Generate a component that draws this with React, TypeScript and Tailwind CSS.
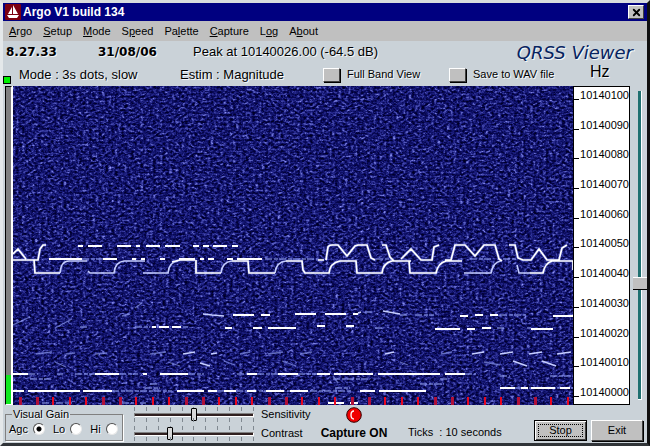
import React, { useState } from 'react';
import { XIcon } from 'lucide-react';

const menuItems = [
  { label: 'Argo', key: 0 },
  { label: 'Setup', key: 0 },
  { label: 'Mode', key: 0 },
  { label: 'Speed', key: 1 },
  { label: 'Palette', key: 2 },
  { label: 'Capture', key: 0 },
  { label: 'Log', key: 1 },
  { label: 'About', key: 1 }
];

const frequencies = [10140100, 10140090, 10140080, 10140070, 10140060, 10140050, 10140040, 10140030, 10140020, 10140010, 10140000];

// [y, x1, x2, x1, x2, ...]
const strongDashes = [
  [246, 78, 83, 88, 102, 117, 131, 136, 140, 146, 160, 165, 180, 193, 199, 203, 209, 213, 227, 232, 238],
  [259, 49, 82, 103, 117, 132, 136, 141, 145, 160, 165, 179, 195, 200, 204, 208, 214, 227, 233, 237, 262],
  [327, 152, 156, 159, 169, 172, 181],
  [315, 233, 254, 261, 270, 475, 483, 490, 498],
  [314, 295, 316, 325, 346, 353, 358],
  [316, 460, 468, 553, 573],
  [328, 225, 232, 253, 262, 482, 491],
  [328, 268, 296],
  [329, 435, 460, 467, 475, 531, 553],
  [326, 317, 325, 346, 354],
  [374, 13, 28, 95, 119, 143, 147, 160, 188, 247, 257, 278, 298, 317, 330, 334, 373, 378, 440, 445, 465],
  [391, 13, 24, 28, 80, 83, 112, 177, 204, 208, 217, 224, 236, 247, 256, 266, 284, 290, 308, 360, 375, 379, 426],
  [388, 500, 515, 521, 528, 531, 555, 560, 570],
  [403, 328, 344, 350, 358]
];

const faintDashes = [
  [259, 82, 103, 265, 317, 376, 392, 470, 491, 503, 516],
  [327, 135, 150, 183, 188, 80, 88, 346, 352],
  [315, 400, 408, 415, 434, 500, 526],
  [312, 365, 374],
  [328, 497, 505, 527, 531, 375, 383],
  [374, 28, 38, 57, 63, 75, 95, 119, 138, 188, 204, 237, 247, 257, 278, 298, 317, 465, 476],
  [376, 550, 573, 500, 510],
  [379, 30, 52, 333, 370, 440, 448],
  [384, 420, 444, 150, 158],
  [391, 112, 172, 217, 224, 236, 300, 310, 352],
  [388, 145, 160, 335, 350, 515, 573],
  [403, 42, 50, 56, 72, 122, 134, 140, 146]
];

const strongTraces = [
  'M13 260H38L40 249L43 245H46',
  'M13 254L18 249L26 259',
  'M34 260L35 273H60',
  'M326 260L328 247Q329 245 332 245H338L347 256L355 246L358 245H367L371 258L375 260',
  'M318 260H324',
  'M382 245H386L390 257L394 261H411',
  'M401 259L411 249L421 260H432L434 247L439 245',
  'M445 260H451L455 245H465L475 256L484 245H495L499 259L502 261',
  'M509 245H515L518 258L523 260H531L539 249L547 260H559L562 248L567 245',
  'M196 260V273H221',
  'M232 261H248L249 273H275',
  'M286 261H302L303 270L305 273H329Q330 263 340 261H356L357 273H382Q383 263 392 261H409L410 273H436Q438 263 446 261H462',
  'M530 273H543Q545 263 552 261H573V270',
  'M172 262L180 260H195'
];

const softTraces = [
  'M60 273Q61 261 69 261H87',
  'M88 271L90 273H114Q115 262 124 261H145',
  'M143 273H168Q169 262 178 261',
  'M221 273Q222 262 232 261',
  'M275 273Q276 262 286 261',
  'M464 273H491Q493 262 501 261',
  'M517 265L519 273H530',
  'M203 314L212 315L224 316',
  'M358 313L361 312M383 311L400 314',
  'M183 354L195 352M211 354L217 353M385 354L394 352',
  'M472 354L484 352M500 354L513 352M529 354L542 352M557 354L571 352',
  'M200 363L210 366M542 361L556 366M513 361L527 366'
];

const dimTraces = [
  'M13 325L30 317M55 328L72 319M135 308L142 303M122 316L130 314',
  'M36 354L52 352M66 354L75 353M240 354L250 352M268 354L283 352M300 354L312 352M441 354L452 352M95 354L107 353M150 354L166 352',
  'M55 362L66 367M168 362L180 366M224 361L235 365M282 361L296 366M484 362L500 365M571 361V364M400 362L408 365M333 376L338 383'
];

const dashPath = (rows: number[][]) => rows.map(([y, ...xs]) => xs.map((x, i) => i % 2 === 0 ? `M${x} ${y}` : `H${x}`).join('')).join('');

const tickMarks = Array.from({ length: 34 }, (_, i) => Math.round(20 + i * 16.6));

const Spectrogram = () => <svg viewBox="13 86 560 319" preserveAspectRatio="none" className="h-full w-full" role="img" aria-label="Waterfall display">
    <defs>
      <filter id="noise" x="0" y="0" width="100%" height="100%" colorInterpolationFilters="sRGB">
        <feTurbulence type="fractalNoise" baseFrequency="0.313 0.437" numOctaves="3" seed="11" />
        <feColorMatrix values="0.6 0.6 0.5 0 -0.35  0.6 0.6 0.5 0 -0.35  0.6 0.6 0.5 0 -0.35  0 0 0 0 1" />
        <feComponentTransfer>
          <feFuncR type="table" tableValues="0 0 0 0.01 0.03 0.07 0.15 0.27 0.4 0.5 0.6" />
          <feFuncG type="table" tableValues="0 0 0 0.01 0.03 0.08 0.16 0.29 0.42 0.52 0.6" />
          <feFuncB type="table" tableValues="0.12 0.12 0.15 0.22 0.32 0.43 0.55 0.68 0.8 0.9 1" />
        </feComponentTransfer>
      </filter>
    </defs>
    <rect x="13" y="86" width="560" height="319" filter="url(#noise)" />
    <g fill="none" stroke="#8f9cf0">
      <path d={dashPath(faintDashes)} strokeWidth="1.4" strokeDasharray="7 2 4 1" opacity="0.75" />
      <path d={dimTraces.join('')} strokeWidth="1.3" opacity="0.65" />
      <path d={softTraces.join('')} stroke="#c5cdff" strokeWidth="1.600" />
      <path d={strongTraces.join('')} stroke="#6c78e0" strokeWidth="3" opacity="0.5" />
      <path d={strongTraces.join('')} stroke="#ffffff" strokeWidth="1.700" />
      <path d={dashPath(strongDashes)} stroke="#ffffff" strokeWidth="2" />
    </g>
    {tickMarks.map((x, i) => <rect key={x} x={x - 1} y="397" width={i % 5 < 2 ? 3 : 2} height="8" fill={i % 5 < 2 ? '#b01038' : '#e80820'} />)}
  </svg>;

const raised = 'border border-t-white border-l-white border-r-[#404040] border-b-[#404040] bg-[#c0c0c0]';
const engraved = '[text-shadow:1px_1px_0_#f4f8fa]';

const ToggleBox = ({ label, className }: { label: string; className: string }) => <label className={`flex shrink-0 items-center gap-[7px] text-[11px] ${className}`}>
    <input type="checkbox" className={`h-[14px] w-[17px] appearance-none shadow-[1px_1px_0_#000] ${raised}`} />
    {label}
  </label>;

const TickRow = () => <div className="flex h-[4px] justify-between">
    {Array.from({ length: 11 }, (_, i) => <span key={i} className="w-px bg-[#808890]" />)}
  </div>;

const TrackBar = ({ id, initial }: { id: string; initial: number }) => {
  const [value, setValue] = useState(initial);
  return <div className="w-[120px]">
      <TickRow />
      <input id={id} type="range" min={0} max={100} value={value} onChange={e => setValue(Number(e.target.value))} className="-my-[3px] block h-[13px] w-full appearance-none bg-transparent [&::-webkit-slider-runnable-track]:h-[4px] [&::-webkit-slider-runnable-track]:border [&::-webkit-slider-runnable-track]:border-t-[#808080] [&::-webkit-slider-runnable-track]:border-l-[#808080] [&::-webkit-slider-runnable-track]:border-r-white [&::-webkit-slider-runnable-track]:border-b-white [&::-webkit-slider-runnable-track]:bg-[#302020] [&::-webkit-slider-thumb]:-mt-[6px] [&::-webkit-slider-thumb]:h-[13px] [&::-webkit-slider-thumb]:w-[6px] [&::-webkit-slider-thumb]:appearance-none [&::-webkit-slider-thumb]:rounded-[1px] [&::-webkit-slider-thumb]:border [&::-webkit-slider-thumb]:border-black [&::-webkit-slider-thumb]:bg-[#d8d8d8]" />
      <TickRow />
    </div>;
};

const App: React.FC = () => {
  const [gain, setGain] = useState('Agc');
  const [offset, setOffset] = useState(37);
  return <div className="border-[3px] border-t-[#d8dcde] border-l-[#e4e8ea] border-r-[#101010] border-b-[#303438] bg-[#cad2d8] font-['Liberation_Sans',Arial,sans-serif] text-black">
      <header className="flex h-[18px] items-center bg-[#000080] pr-[3px] pl-[2px]">
        <svg viewBox="0 0 16 16" className="h-4 w-4" aria-hidden="true">
          <rect width="16" height="16" rx="1" fill="#7c0010" />
          <path d="M7 3V10H3Z M8 1L13 10H8Z M2 11H14L12 14H4Z" fill="#fff" />
        </svg>
        <h1 className="ml-[2px] text-[12px] font-bold text-white">Argo V1 build 134</h1>
        <button aria-label="Close" className={`ml-auto flex h-[14px] w-4 items-center justify-center ${raised}`}>
          <XIcon className="h-[11px] w-[11px] shrink-0" strokeWidth={4} />
        </button>
      </header>
      <nav className="flex h-5 items-center gap-[11px] bg-[#c0c0c0] pl-[6px] text-[11px]">
        {menuItems.map(({ label, key }) => <button key={label}>
            {label.slice(0, key)}<u>{label[key]}</u>{label.slice(key + 1)}
          </button>)}
      </nav>

      <div className={`flex h-[22px] items-center pl-[3px] ${engraved}`}>
        <span className="w-[92px] font-['DejaVu_Sans',sans-serif] text-[12px] font-bold">8.27.33</span>
        <span className="w-[95px] font-['DejaVu_Sans',sans-serif] text-[12px] font-bold">31/08/06</span>
        <span className="text-[13px]">Peak at 10140026.00 (-64.5 dB)</span>
        <span className="mr-[14px] ml-auto font-['DejaVu_Sans',sans-serif] text-[18px] text-[#082460] italic">QRSS Viewer</span>
      </div>
      <div className={`flex h-[23px] items-center text-[13px] ${engraved}`}>
        <span className="mb-[2px] h-2 w-2 self-end border border-black bg-[#00f000]" />
        <span className="ml-[8px] w-[161px] shrink-0">Mode : 3s dots, slow</span>
        <span className="w-[143px] shrink-0">Estim : Magnitude</span>
        <ToggleBox label="Full Band View" className="w-[126px]" />
        <ToggleBox label="Save to WAV file" className="w-[141px]" />
        <span className="mb-[6px] text-[16px]">Hz</span>
      </div>

      <main className="flex h-[319px]">
        <div className="ml-[2px] flex w-[7px] shrink-0 flex-col border border-t-black border-r-white border-b-white border-l-black bg-[#808080]">
          <span className="mt-auto h-[29px] bg-[#10e820]" />
        </div>
        <div className="min-w-0 flex-1 border-l border-white">
          <Spectrogram />
        </div>
        <ol className="flex w-[57px] shrink-0 flex-col justify-between border border-black bg-white pt-px pb-[5px] text-[11px] leading-[14px]">
          {frequencies.map(f => <li key={f} className="flex justify-between">
              <span className="mb-[2px] w-[5px] self-end border-b border-black" />
              <span>{f}</span>
            </li>)}
        </ol>
        <div className="flex w-[17px] shrink-0 justify-end py-[5px]">
          <input aria-label="Frequency offset" type="range" min={0} max={100} value={offset} onChange={e => setOffset(Number(e.target.value))} className="h-full w-[14px] appearance-none bg-transparent [direction:rtl] [writing-mode:vertical-lr] [&::-webkit-slider-runnable-track]:w-[4px] [&::-webkit-slider-runnable-track]:border-r [&::-webkit-slider-runnable-track]:border-b [&::-webkit-slider-runnable-track]:border-white [&::-webkit-slider-runnable-track]:bg-[#207070] [&::-webkit-slider-thumb]:-ml-[5px] [&::-webkit-slider-thumb]:h-[13px] [&::-webkit-slider-thumb]:w-[14px] [&::-webkit-slider-thumb]:appearance-none [&::-webkit-slider-thumb]:border-t [&::-webkit-slider-thumb]:border-b [&::-webkit-slider-thumb]:border-t-white [&::-webkit-slider-thumb]:border-b-black [&::-webkit-slider-thumb]:bg-[#c0c0c0]" />
        </div>
      </main>

      <footer className="flex h-[38px] text-[11px]">
        <fieldset className={`mt-[2px] ml-[2px] h-[34px] w-[118px] shrink-0 border border-[#808080] shadow-[1px_1px_0_#fff] ${engraved}`}>
          <legend className="ml-[6px] px-px leading-[14px]">Visual Gain</legend>
          <div className="flex items-center gap-[8px] pl-[3px] leading-[16px]">
            {['Agc', 'Lo', 'Hi'].map(name => <label key={name} className="flex items-center gap-[5px]">
                {name}
                <input type="radio" name="gain" checked={gain === name} onChange={() => setGain(name)} className="h-[12px] w-[12px] appearance-none rounded-full border border-t-[#505050] border-r-[#e8e8e8] border-b-[#e8e8e8] border-l-[#505050] bg-white checked:bg-[radial-gradient(circle,#000_2px,#fff_3px)]" />
              </label>)}
          </div>
        </fieldset>
        <div className="ml-[11px] flex shrink-0 flex-col gap-[4px] pt-[2px]">
          <TrackBar id="sensitivity" initial={50} />
          <TrackBar id="contrast" initial={29} />
        </div>
        <div className="ml-[7px] flex w-[58px] shrink-0 flex-col gap-[5px] pt-[2px] leading-[14px]">
          <label htmlFor="sensitivity">Sensitivity</label>
          <label htmlFor="contrast">Contrast</label>
        </div>
        <div className="flex w-[70px] shrink-0 flex-col items-center gap-[2px] pt-[2px]">
          <svg viewBox="0 0 16 16" className="h-4 w-4" aria-hidden="true">
            <circle cx="8" cy="8" r="7.300" fill="#f00000" stroke="#300" />
            <path d="M8 4Q5 4 5 8T8 12" fill="none" stroke="#fff" strokeWidth="1.300" />
          </svg>
          <span className="text-[12px] leading-[16px] font-bold whitespace-nowrap">Capture ON</span>
        </div>
        <span className="mt-[19px] ml-[19px] shrink-0 leading-[16px] whitespace-pre">Ticks  : 10 seconds</span>
        <div className="mt-[15px] mr-[4px] ml-auto flex h-[21px] gap-[4px]">
          <button className="w-[53px] border border-black bg-[#c0c0c0] p-px shadow-[inset_1px_1px_0_#fff,inset_-1px_-1px_0_#404040]">
            <span className="m-[2px] block border border-dotted border-black leading-[11px]">Stop</span>
          </button>
          <button className={`w-[52px] shadow-[1px_1px_0_#000] ${raised}`}>Exit</button>
        </div>
      </footer>
    </div>;
};
export default App;
